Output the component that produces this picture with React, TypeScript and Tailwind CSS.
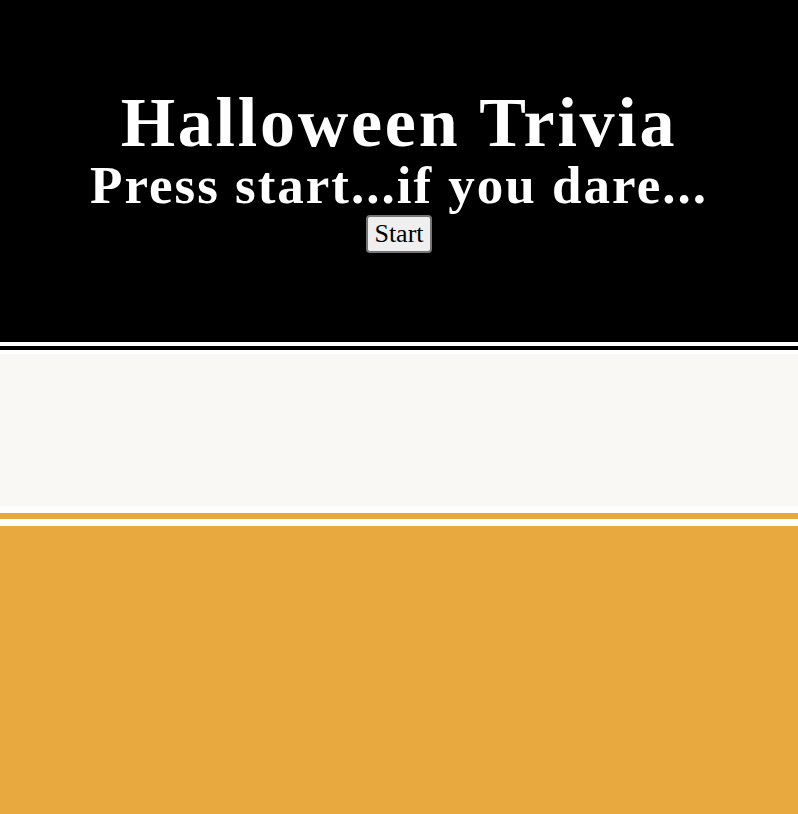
export default function App() {
  const serif = { fontFamily: '"Liberation Serif", "Times New Roman", serif' };
  return (
    <div className="w-full min-h-[814px] flex flex-col bg-white" style={serif}>
      <header className="h-[354px] bg-black border-b-[12px] border-double border-white flex flex-col items-center pt-[88px]">
        <h1 className="text-white font-bold text-[70px] leading-none tracking-[2.75px]">Halloween Trivia</h1>
        <h2 className="text-white font-bold text-[53px] leading-none tracking-[2px] mt-[1px]">Press start...if you dare...</h2>
        <button className="mt-[3px] bg-[#efefef] text-black text-[26px] leading-[1.15] border-2 border-[#767676] rounded-[4px] px-[6px] py-[2px]">Start</button>
      </header>
      <section className="h-[152px] bg-[#f9f8f5]" />
      <div className="bg-white py-[7px]">
        <div className="h-[6px] bg-[#e8a93e]" />
      </div>
      <section className="flex-1 bg-[#e8a93e]" />
    </div>
  );
}
